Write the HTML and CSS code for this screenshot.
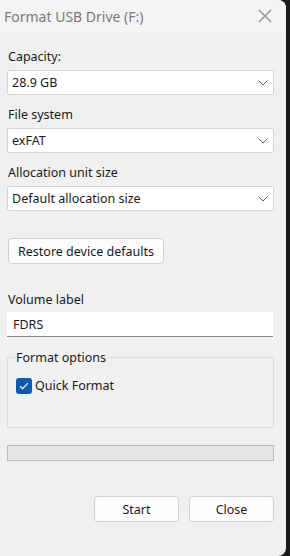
FILE: index.html
```html
<!DOCTYPE html>
<html>
<head>
<meta charset="utf-8">
<link rel="stylesheet" href="styles.css">
</head>
<body>
<div class="window">
  <div class="titlebar">
    <span class="title">Format USB Drive (F:)</span>
    <svg class="close" width="14" height="14" viewBox="0 0 14 14"><path d="M1 1L13 13M13 1L1 13" stroke="#8a8a8a" stroke-width="1.2" fill="none"/></svg>
  </div>
  <div class="content">
    <div class="label lbl-first">Capacity:</div>
    <div class="select"><span>28.9 GB</span><svg class="chev" width="10" height="6" viewBox="0 0 10 6"><path d="M0.5 0.5L5 5L9.5 0.5" stroke="#606060" stroke-width="1" fill="none"/></svg></div>
    <div class="label">File system</div>
    <div class="select"><span>exFAT</span><svg class="chev" width="10" height="6" viewBox="0 0 10 6"><path d="M0.5 0.5L5 5L9.5 0.5" stroke="#606060" stroke-width="1" fill="none"/></svg></div>
    <div class="label">Allocation unit size</div>
    <div class="select"><span>Default allocation size</span><svg class="chev" width="10" height="6" viewBox="0 0 10 6"><path d="M0.5 0.5L5 5L9.5 0.5" stroke="#606060" stroke-width="1" fill="none"/></svg></div>
    <div class="btn restore">Restore device defaults</div>
    <div class="label lbl-vol">Volume label</div>
    <div class="input">FDRS</div>
    <fieldset class="group">
      <legend>Format options</legend>
      <div class="check-row">
        <span class="checkbox"><svg width="10" height="8" viewBox="0 0 10 8"><path d="M1 4.2L3.6 6.6L9 1.2" stroke="#fff" stroke-width="1.2" fill="none"/></svg></span>
        <span>Quick Format</span>
      </div>
    </fieldset>
    <div class="progress"></div>
    <div class="actions">
      <div class="btn action">Start</div>
      <div class="btn action">Close</div>
    </div>
  </div>
</div>
</body>
</html>
```
FILE: styles.css
```css
html, body {
  margin: 0;
  padding: 0;
  background: #1b1b1b;
}
body {
  width: 290px;
  height: 556px;
  overflow: hidden;
  font-family: "Segoe UI", "Noto Sans", "Open Sans", sans-serif;
  font-size: 12.5px;
  color: #1a1a1a;
}
.window {
  width: 286px;
  height: 556px;
  background: #f0f0f0;
  border-radius: 0 8px 8px 0;
  box-sizing: border-box;
}
.titlebar {
  height: 32px;
  background: #f3f3f3;
  border-radius: 0 8px 0 0;
  display: flex;
  align-items: center;
  justify-content: space-between;
  padding: 0 14px 0 4px;
}
.title {
  font-size: 14px;
  color: #7a7a7a;
  margin-top: 1px;
}
.close {
  display: block;
}
.content {
  padding: 0 12px 0 7px;
}
.label {
  margin: 0 0 0 1px;
  height: 17px;
  line-height: 17px;
}
.lbl-first {
  margin-top: 16px;
  margin-bottom: 5px;
}
.label:not(.lbl-first) {
  margin-top: 11px;
  margin-bottom: 5px;
}
.select {
  height: 25px;
  background: #fff;
  border: 1px solid #d4d4d4;
  border-radius: 2px;
  box-sizing: border-box;
  display: flex;
  align-items: center;
  justify-content: space-between;
  padding: 0 5px 0 4px;
}
.chev {
  display: block;
}
.btn {
  background: #fdfdfd;
  border: 1px solid #d0d0d0;
  border-radius: 4px;
  box-sizing: border-box;
  display: flex;
  align-items: center;
  justify-content: center;
  height: 26px;
}
.restore {
  width: 156px;
  margin: 27px 0 0 1px;
}
.label.lbl-vol {
  margin-top: 27px;
  margin-bottom: 0;
}
.input {
  height: 25px;
  background: #fff;
  border-bottom: 1px solid #8a8a8a;
  box-sizing: border-box;
  padding: 0 6px;
  display: flex;
  align-items: center;
  width: 266px;
  margin-top: 4px;
}
.group {
  margin: 12px 0 0 0;
  padding: 0 8px;
  height: 79px;
  box-sizing: border-box;
  border: 1px solid #dcdcdc;
  min-width: 0;
}
.group legend {
  padding: 0 1px;
  margin-left: -1px;
  line-height: 17px;
}
.check-row {
  display: flex;
  align-items: center;
  gap: 3px;
  margin-top: 11px;
}
.checkbox {
  width: 16px;
  height: 16px;
  border-radius: 3px;
  background: #0b5cb0;
  display: flex;
  align-items: center;
  justify-content: center;
}
.checkbox svg {
  display: block;
}
.progress {
  margin-top: 17px;
  height: 16px;
  background: #e6e6e6;
  border: 1px solid #bcbcbc;
  box-sizing: border-box;
}
.actions {
  display: flex;
  justify-content: flex-end;
  gap: 10px;
  margin-top: 35px;
}
.action {
  width: 85px;
  height: 26px;
}
```
